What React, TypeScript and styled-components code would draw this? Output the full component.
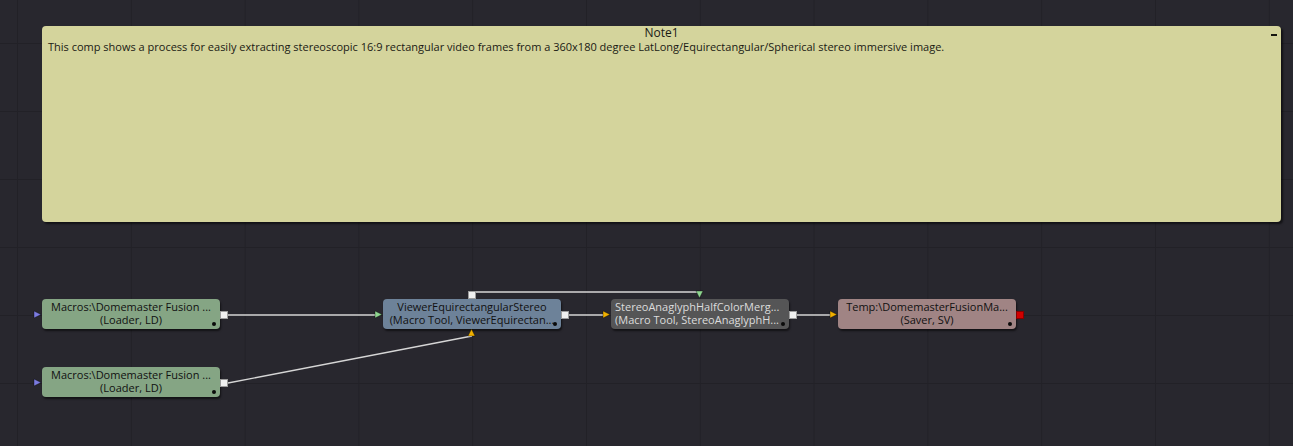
import React from 'react'
import styled, { createGlobalStyle } from 'styled-components'

const GlobalStyle = createGlobalStyle`
    html, body {
        margin:0;
        padding:0;
        background:#28272e;
        overflow:hidden;
    }
    body {
        font-family:"Open Sans", "Noto Sans", sans-serif;
    }
`

const Canvas = styled.div`
    position:relative;
    width:1293px;
    height:446px;
    box-sizing:border-box;
    padding:26px 12px 0 42px;
    background-color:#28272e;
    background-image:
        linear-gradient(to right, #222127 1px, transparent 1px),
        linear-gradient(to bottom, #222127 1px, transparent 1px);
    background-size:113.8px 68px;
    background-position:17px -25px;
    overflow:hidden;
`

const Note = styled.div`
    position:relative;
    height:196px;
    display:flex;
    flex-direction:column;
    background:#d4d49c;
    border-radius:4px;
    box-shadow:2px 2px 2px rgba(0,0,0,0.55);
    color:#1a1a14;
    font-size:11px;
    .title{
        text-align:center;
        font-size:12px;
        line-height:14px;
    }
    .body{
        padding:0 6px;
        line-height:14px;
    }
`

const Collapse = styled.span`
    position:absolute;
    right:4px;
    top:8px;
    width:6px;
    height:2px;
    background:#15150f;
`

const Wires = styled.svg`
    position:absolute;
    left:0;
    top:0;
    pointer-events:none;
`

const NodeBox = styled.div<{ $bg: string; $fg: string; $align: string }>`
    position:absolute;
    width:178px;
    height:30px;
    box-sizing:border-box;
    display:flex;
    flex-direction:column;
    align-items:${p => (p.$align === 'left' ? 'flex-start' : 'center')};
    padding:2px 6px 0 ${p => (p.$align === 'left' ? '4px' : '6px')};
    border-radius:4px;
    background:${p => p.$bg};
    color:${p => p.$fg};
    box-shadow:1px 2px 2px rgba(0,0,0,0.55);
    font-size:11px;
    line-height:12.5px;
    white-space:nowrap;
`

const Dot = styled.span`
    position:absolute;
    right:4px;
    bottom:3px;
    width:4px;
    height:4px;
    border-radius:50%;
    background:#0a0a0a;
`

const Square = styled.span<{ $color: string }>`
    position:absolute;
    width:8px;
    height:8px;
    box-sizing:border-box;
    background:${p => p.$color};
    border:1px solid rgba(0,0,0,0.35);
`

const Tri = styled.svg`
    position:absolute;
    overflow:visible;
`

type Port = { kind: 'sq' | 'tri'; x: number; y: number; color: string; dir?: 'r' | 'u' | 'd' }

type NodeData = {
    x: number
    y: number
    bg: string
    fg: string
    align: string
    lines: string[]
    ports: Port[]
}

const PURPLE = '#7b7be0'
const GREEN = '#8fd690'
const ORANGE = '#f0b000'
const WHITE = '#f0f0f0'

const nodes: NodeData[] = [
    {
        x: 42, y: 299, bg: '#85a584', fg: '#111', align: 'center',
        lines: ['Macros:\\Domemaster Fusion ...', '(Loader, LD)'],
        ports: [
            { kind: 'tri', x: -8, y: 12, color: PURPLE, dir: 'r' },
            { kind: 'sq', x: 178, y: 12, color: WHITE },
        ],
    },
    {
        x: 42, y: 367, bg: '#85a584', fg: '#111', align: 'center',
        lines: ['Macros:\\Domemaster Fusion ...', '(Loader, LD)'],
        ports: [
            { kind: 'tri', x: -8, y: 12, color: PURPLE, dir: 'r' },
            { kind: 'sq', x: 178, y: 12, color: WHITE },
        ],
    },
    {
        x: 383, y: 299, bg: '#6d8299', fg: '#111', align: 'center',
        lines: ['ViewerEquirectangularStereo', '(Macro Tool, ViewerEquirectan...'],
        ports: [
            { kind: 'tri', x: -8, y: 12, color: GREEN, dir: 'r' },
            { kind: 'sq', x: 178, y: 12, color: WHITE },
            { kind: 'sq', x: 85, y: -8, color: WHITE },
            { kind: 'tri', x: 85, y: 30, color: ORANGE, dir: 'u' },
        ],
    },
    {
        x: 611, y: 299, bg: '#555556', fg: '#dcdcdc', align: 'left',
        lines: ['StereoAnaglyphHalfColorMerg...', '(Macro Tool, StereoAnaglyphH...'],
        ports: [
            { kind: 'tri', x: -8, y: 12, color: ORANGE, dir: 'r' },
            { kind: 'sq', x: 178, y: 12, color: WHITE },
            { kind: 'tri', x: 85, y: -8, color: GREEN, dir: 'd' },
        ],
    },
    {
        x: 838, y: 299, bg: '#a08484', fg: '#111', align: 'center',
        lines: ['Temp:\\DomemasterFusionMa...', '(Saver, SV)'],
        ports: [
            { kind: 'tri', x: -8, y: 12, color: ORANGE, dir: 'r' },
            { kind: 'sq', x: 178, y: 12, color: '#d00000' },
        ],
    },
]

const triPoints = (dir?: string) => {
    if (dir === 'u') return '3.5,0 7,7 0,7'
    if (dir === 'd') return '0,0 7,0 3.5,7'
    return '0,0 7,3.5 0,7'
}

function PortView({ p }: { p: Port }) {
    if (p.kind === 'sq') {
        return <Square $color={p.color} style={{ left: p.x, top: p.y }} />
    }
    return (
        <Tri width="7" height="7" style={{ left: p.x, top: p.y }}>
            <polygon points={triPoints(p.dir)} fill={p.color} stroke="rgba(0,0,0,0.45)" strokeWidth="0.8" />
        </Tri>
    )
}

function Node({ n }: { n: NodeData }) {
    return (
        <NodeBox $bg={n.bg} $fg={n.fg} $align={n.align} style={{ left: n.x, top: n.y }}>
            {n.lines.map((l, i) => <span key={i}>{l}</span>)}
            <Dot />
            {n.ports.map((p, i) => <PortView key={i} p={p} />)}
        </NodeBox>
    )
}

export default function App() {
    return (
        <>
            <GlobalStyle />
            <Canvas>
                <Note>
                    <div className="title">Note1</div>
                    <div className="body">This comp shows a process for easily extracting stereoscopic 16:9 rectangular video frames from a 360x180 degree LatLong/Equirectangular/Spherical stereo immersive image.</div>
                    <Collapse />
                </Note>
                <Wires width="1293" height="446">
                    <g stroke="#d6d6d6" strokeWidth="1.4" fill="none">
                        <line x1="228" y1="315" x2="376" y2="315" />
                        <line x1="228" y1="383" x2="472" y2="336" />
                        <polyline points="472,292 700,292 700,294" />
                        <line x1="569" y1="315" x2="604" y2="315" />
                        <line x1="797" y1="315" x2="831" y2="315" />
                    </g>
                </Wires>
                {nodes.map((n, i) => <Node key={i} n={n} />)}
            </Canvas>
        </>
    )
}
